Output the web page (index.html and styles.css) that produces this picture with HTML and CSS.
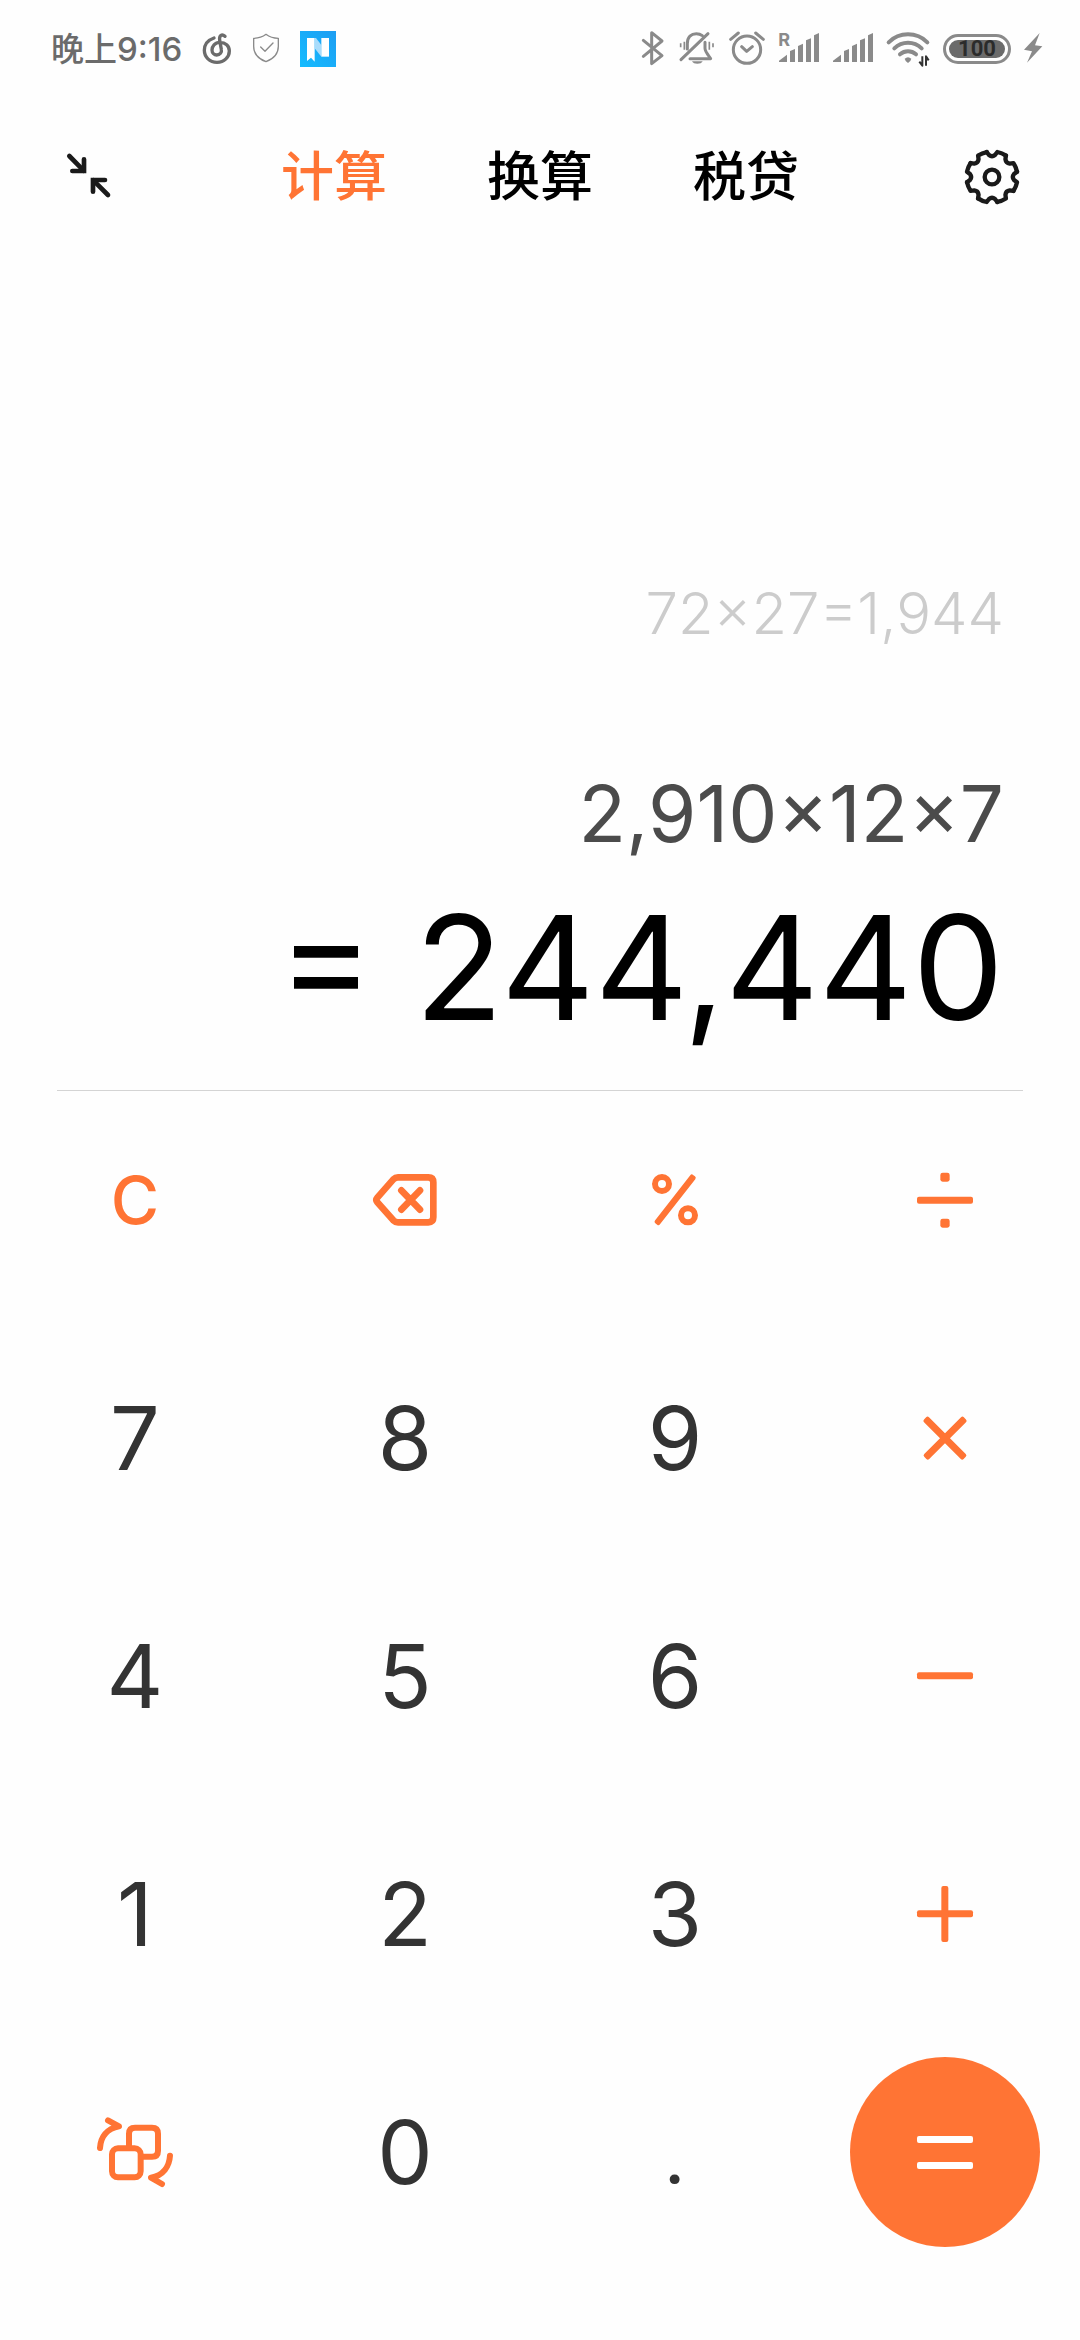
FILE: index.html
```
<!DOCTYPE html>
<html lang="zh-CN">
<head>
<meta charset="utf-8">
<meta name="viewport" content="width=device-width, initial-scale=1">
<title>计算器</title>
<link rel="stylesheet" href="styles.css">
</head>
<body>

<div class="status_bar">
	<div class="status_left">
		<span class="clock">晚上9:16</span>
		<svg class="ic_music" viewBox="0 0 90 108"><path d="M36 21C16 28 7 42 7 58C7 78 23 94 45 94C67 94 82 78 82 60C82 44 70 34 54 34C38 34 30 46 30 57C30 66 37 72 44 72C54 72 60 64 58 55L53 28C51 12 60 8 69 16"/></svg>
		<svg class="ic_shield" viewBox="0 0 84 108"><path d="M42 10C32 18 18 22 5 22V46C5 68 20 84 42 92C64 84 79 68 79 46V22C66 22 52 18 42 10ZM26 48L39 61L63 36"/></svg>
		<svg class="ic_news" viewBox="0 0 108 108">
			<defs><linearGradient id="blue" x1="0" y1="1" x2="1" y2="0"><stop offset="0" stop-color="#14bcff"/><stop offset="1" stop-color="#1e9df2"/></linearGradient></defs>
			<rect width="108" height="108" fill="url(#blue)"/>
			<path d="M21 21H44V92L33 80L21 90Z" fill="#fff"/>
			<path d="M44 21H48L64 42V77L44 52Z" fill="#a9dcfb"/>
			<path d="M64 21H87V77H64Z" fill="#fff"/>
		</svg>
	</div>
	<div class="status_right">
		<svg class="ic_bluetooth" viewBox="0 0 78 108"><path d="M10 28L66 74L35 98V5L66 30L10 76"/></svg>
		<svg class="ic_mute" viewBox="0 0 114 108">
			<path d="M28 54V38C28 17 40 8 55 8C62 8 68 10 73 14M81 34V52C81 64 96 78 98 83H36M9 86L90 8"/>
			<path class="thin" d="M8 37V49M19 32V56M94 32V56M105 37V49"/>
			<path class="solid" d="M42 91H74C70 101 46 101 42 91Z"/>
		</svg>
		<svg class="ic_alarm" viewBox="0 0 114 108"><circle cx="57" cy="56" r="41"/><path d="M41 47L56 61L73 47M8 25L31 6M83 6L106 25"/></svg>
		<svg class="ic_signal" viewBox="0 0 126 108">
			<path id="bars" class="solid" d="M3 93V89L27 71V93ZM36 93V60L51 54V93ZM60 93V45L75 38V93ZM84 93V28L99 22V93ZM108 93V13L123 6V93Z"/>
			<text x="1" y="46">R</text>
		</svg>
		<svg class="ic_signal" viewBox="0 0 126 108"><use href="#bars"/></svg>
		<svg class="ic_wifi" viewBox="0 0 135 108">
			<path d="M8 34C40 2 92 2 124 34M25 52C48 30 84 30 107 52M42 70C56 58 76 58 90 70"/>
			<path class="solid" d="M56 83Q66 74 76 83Q74 92 66 96Q58 92 56 83Z"/>
			<path class="arrows" d="M109 76V104L100 92M120 104V76L128 88"/>
		</svg>
		<div class="battery"><span>100</span></div>
		<svg class="ic_bolt" viewBox="0 0 60 108"><path class="solid" d="M50 6L3 56L27 61L12 95L58 46L36 43Z"/></svg>
	</div>
</div>

<div class="header">
	<button class="icon_btn" aria-label="缩小窗口">
		<svg viewBox="0 0 168 168">
			<path d="M28 21L71 65M144 138L100 94"/>
			<path d="M72 31V66H37M99 128V93H135"/>
		</svg>
	</button>
	<div class="tabs">
		<a class="tab active" href="#">计算</a>
		<a class="tab" href="#">换算</a>
		<a class="tab" href="#">税贷</a>
	</div>
	<button class="icon_btn" aria-label="设置">
		<svg class="gear" viewBox="-84 -84 168 168">
			<path id="tooth" d="M-16 -75L-9 -66Q0 -59 9 -66L16 -75Q30 -72 42 -64"/>
			<use href="#tooth" transform="rotate(45)"/>
			<use href="#tooth" transform="rotate(90)"/>
			<use href="#tooth" transform="rotate(135)"/>
			<use href="#tooth" transform="rotate(180)"/>
			<use href="#tooth" transform="rotate(225)"/>
			<use href="#tooth" transform="rotate(270)"/>
			<use href="#tooth" transform="rotate(315)"/>
			<circle r="22"/>
		</svg>
	</button>
</div>

<div class="display">
	<div class="history">72×27=1,944</div>
	<div class="expression">2,910×12×7</div>
	<div class="result">= 244,440</div>
</div>

<div class="keypad">
	<button class="key clear">C</button>
	<button class="key" aria-label="退格">
		<svg class="backspace" viewBox="0 0 192 168"><path d="M75 16H166Q181 16 181 31V136Q181 151 166 151H75Q67 151 61 145L13 91Q7 84 13 77L61 22Q67 16 75 16ZM85 55L141 113M141 55L85 113"/></svg>
	</button>
	<button class="key" aria-label="百分号">
		<svg class="op" viewBox="0 0 168 168">
			<path fill-rule="evenodd" d="M15 36a30 30 0 1 0 60 0a30 30 0 1 0 -60 0ZM33 36a12 12 0 1 1 24 0a12 12 0 1 1 -24 0ZM93 130a30 30 0 1 0 60 0a30 30 0 1 0 -60 0ZM111 130a12 12 0 1 1 24 0a12 12 0 1 1 -24 0Z"/>
			<rect x="-8" y="74" width="184" height="19" rx="6" transform="rotate(-52 84 83)"/>
		</svg>
	</button>
	<button class="key" aria-label="除">
		<svg class="op" viewBox="0 0 168 168"><rect x="0" y="74" width="168" height="21" rx="6"/><rect x="70" y="2" width="28" height="27" rx="7"/><rect x="70" y="140" width="28" height="27" rx="7"/></svg>
	</button>

	<button class="key">7</button>
	<button class="key">8</button>
	<button class="key">9</button>
	<button class="key" aria-label="乘">
		<svg class="op" viewBox="0 0 168 168"><rect x="0" y="74" width="168" height="21" rx="6" transform="rotate(45 84 84)"/><rect x="0" y="74" width="168" height="21" rx="6" transform="rotate(-45 84 84)"/></svg>
	</button>

	<button class="key">4</button>
	<button class="key">5</button>
	<button class="key">6</button>
	<button class="key" aria-label="减">
		<svg class="op" viewBox="0 0 168 168"><rect x="0" y="73" width="168" height="21" rx="6"/></svg>
	</button>

	<button class="key">1</button>
	<button class="key">2</button>
	<button class="key">3</button>
	<button class="key" aria-label="加">
		<svg class="op" viewBox="0 0 168 168"><rect x="0" y="73" width="168" height="21" rx="6"/><rect x="73" y="0" width="21" height="168" rx="6"/></svg>
	</button>

	<button class="key" aria-label="科学计算">
		<svg class="switch" viewBox="0 0 240 240">
			<rect x="51" y="109" width="86" height="87" rx="18"/>
			<path d="M102 104V65Q102 47 120 47H171Q189 47 189 65V116Q189 134 171 134H140"/>
			<path d="M15 108C17 75 35 50 72 43L39 25M225 131C223 163 205 190 168 197L201 216"/>
		</svg>
	</button>
	<button class="key">0</button>
	<button class="key point">.</button>
	<button class="key equals" aria-label="等于">
		<svg class="op" viewBox="0 0 168 168"><rect x="0" y="36" width="168" height="21" rx="6"/><rect x="0" y="114" width="168" height="21" rx="6"/></svg>
	</button>
</div>

</body>
</html>
```
FILE: styles.css
```
* {
box-sizing:border-box;
}

body {
margin:0;
min-height:100vh;
display:flex;
flex-direction:column;
background:#fefefe;
color:#000;
font-family:Inter, "Noto Sans CJK SC", sans-serif;
}

svg {
display:block;
overflow:visible;
}

button {
padding:0;
border:0;
background:none;
font-family:inherit;
color:inherit;
cursor:pointer;
}

/* status bar */
.status_bar {
height:98px;
padding:0 37px 0 51px;
display:flex;
justify-content:space-between;
align-items:center;
}

.status_left, .status_right {
display:flex;
align-items:center;
}

.status_left {gap:20px;}
.status_right {gap:12px;}

.status_bar svg {
height:36px;
fill:none;
stroke:#8a8a8a;
stroke-width:9;
stroke-linecap:round;
stroke-linejoin:round;
}

.status_bar .solid {
fill:#8a8a8a;
stroke:none;
}

.clock {
font-size:33px;
line-height:40px;
font-weight:500;
color:#6b6b6b;
}

.status_bar .ic_music {width:30px; stroke:#6b6b6b; stroke-width:10;}
.status_bar .ic_shield {width:28px; stroke:#8a8a8a; stroke-width:4;}
.status_bar .ic_news {width:36px; stroke:none;}
.ic_bluetooth {width:26px;}
.ic_mute {width:38px;}
.ic_mute .thin {stroke-width:5; stroke-linecap:butt;}
.ic_alarm {width:38px;}
.ic_signal {width:42px;}
.ic_signal text {fill:#8a8a8a; stroke:none; font-size:54px; font-weight:700;}
.status_bar .ic_wifi {width:45px; stroke-width:12;}
.ic_wifi .arrows {stroke:#333; stroke-width:6; stroke-linecap:butt;}
.ic_bolt {width:20px;}

.battery {
width:68px;
height:30px;
padding:3px;
border:3px solid #8a8a8a;
border-radius:15px;
}

.battery span {
display:block;
height:18px;
border-radius:9px;
background:#6b6b6b;
color:#2b2b2b;
font-family:Roboto, sans-serif;
font-size:22px;
line-height:18px;
font-weight:700;
text-align:center;
}

/* header */
.header {
height:158px;
padding:0 60px;
display:flex;
justify-content:space-between;
align-items:center;
}

.icon_btn {
width:56px;
height:56px;
}

.icon_btn svg {
width:56px;
height:56px;
fill:none;
stroke:#1a1a1a;
stroke-width:14;
stroke-linecap:round;
}

.icon_btn .gear {
stroke-width:13;
stroke-linejoin:round;
}

.tabs {
display:flex;
gap:100px;
}

.tab {
font-size:53px;
line-height:72px;
font-weight:500;
color:#000;
text-decoration:none;
}

.tab.active {
color:#ff7434;
}

/* display */
.display {
flex:1;
margin:0 57px;
padding:0 19px 42px;
border-bottom:1px solid #d4d4d4;
display:flex;
flex-direction:column;
justify-content:flex-end;
text-align:right;
}

.history {
margin-bottom:111px;
font-size:58px;
line-height:80px;
font-weight:300;
color:#ccc;
}

.expression {
margin-bottom:24px;
font-size:78px;
line-height:100px;
font-weight:400;
color:#4b4b4b;
}

.result {
font-size:145px;
line-height:160px;
}

/* keypad */
.keypad {
padding-bottom:79px;
display:grid;
grid-template-columns:repeat(4, 1fr);
grid-auto-rows:218px;
row-gap:20px;
place-items:center;
}

.key {
width:190px;
height:190px;
border-radius:50%;
display:flex;
justify-content:center;
align-items:center;
font-size:88px;
color:#333;
}

.key svg {
fill:#ff7434;
}

.key.clear {
font-size:66px;
font-weight:500;
color:#ff7434;
}

.key.point {
font-family:Roboto, sans-serif;
}

.key .op {
width:56px;
height:56px;
}

.key .backspace, .key .switch {
fill:none;
stroke:#ff7434;
stroke-width:20;
stroke-linecap:round;
stroke-linejoin:round;
}

.key .backspace {width:64px; height:56px;}
.key .switch {width:80px; height:80px; stroke-width:18;}

.key.equals {
background:#ff7434;
}

.key.equals svg {
fill:#fff;
}
```
